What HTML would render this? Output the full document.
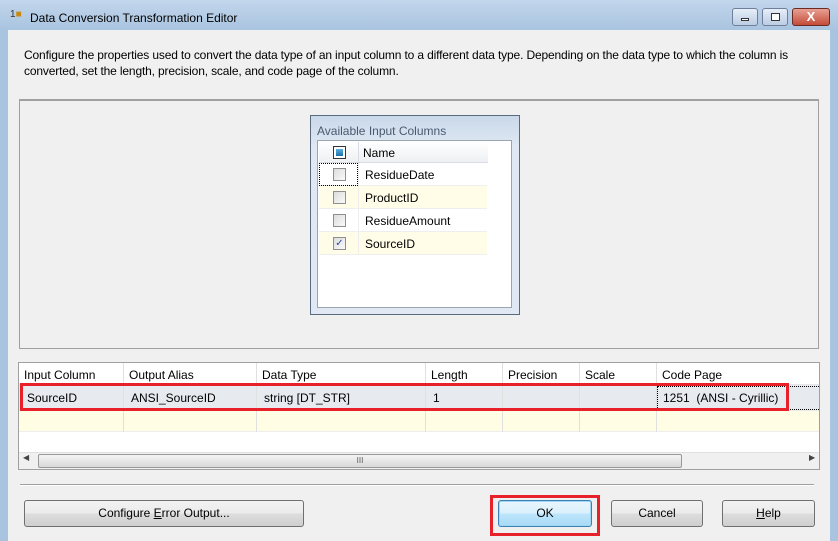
<!DOCTYPE html><html><head><style>
*{margin:0;padding:0;box-sizing:border-box}
body{width:838px;height:541px;overflow:hidden;font-family:"Liberation Sans",sans-serif;font-size:12px;color:#000;background:#a9c4e0;position:relative}
.a{position:absolute}
.btn{position:absolute;border:1px solid #707070;border-radius:3px;background:linear-gradient(#f2f2f2 0%,#ebebeb 50%,#dddddd 51%,#cfcfcf 100%);text-align:center;line-height:25px;font-size:12px}
.cb{position:absolute;width:13px;height:13px;border:1px solid #8f8f8f;background:linear-gradient(135deg,#dcdcdc,#fafafa)}
.col{position:absolute;top:0;height:100%;border-left:1px solid #e0e0e0}
</style></head><body>
<div class="a" style="left:0;top:0;width:838px;height:30px;background:linear-gradient(#c2d6ec,#a9c4e0)"></div>
<div class="a" style="left:10px;top:9px;font-size:10px;color:#333">1<span style="color:#c88a10">&#9632;</span></div>
<div class="a" style="left:30px;top:11px;font-size:12px">Data Conversion Transformation Editor</div>
<div class="a" style="left:732px;top:8px;width:26px;height:18px;border:1px solid #6d7f99;border-radius:3px;background:linear-gradient(#e6eef8,#bccde3)"><div class="a" style="left:8px;top:9px;width:8px;height:3px;border:1px solid #333;background:#fff"></div></div>
<div class="a" style="left:762px;top:8px;width:26px;height:18px;border:1px solid #6d7f99;border-radius:3px;background:linear-gradient(#e6eef8,#bccde3)"><div class="a" style="left:8px;top:4px;width:9px;height:8px;border:1px solid #333;background:#fff"></div></div>
<div class="a" style="left:792px;top:8px;width:38px;height:18px;border:1px solid #6b2a22;border-radius:3px;background:linear-gradient(#e8a093,#c44c38);color:#fff;font-weight:bold;text-align:center;line-height:16px;font-size:13px">X</div>
<div class="a" style="left:8px;top:30px;width:822px;height:511px;background:#f0f0f0"></div>
<div class="a" style="left:24px;top:47px;width:800px;line-height:16px;letter-spacing:-0.15px">Configure the properties used to convert the data type of an input column to a different data type. Depending on the data type to which the column is converted, set the length, precision, scale, and code page of the column.</div>
<div class="a" style="left:19px;top:99px;width:800px;height:250px;border:1px solid #a0a0a0;border-top:2px solid #a0a0a0;background:#f0f0f0"></div>
<div class="a" style="left:310px;top:115px;width:210px;height:200px;border:1px solid #5a6b80;background:linear-gradient(#c9d8ea,#dfe8f3 30px,#dfe8f3)"></div>
<div class="a" style="left:317px;top:124px;color:#4a5a6e">Available Input Columns</div>
<div class="a" style="left:317px;top:140px;width:195px;height:168px;border:1px solid #9aa5b3;background:#fff">
 <div class="a" style="left:1px;top:1px;width:169px;height:21px;background:linear-gradient(#fff,#eef0f3);border-bottom:1px solid #d8dce2"></div>
 <div class="a" style="left:40px;top:1px;height:21px;border-left:1px solid #d8dce2"></div>
 <div class="a" style="left:15px;top:5px;width:13px;height:13px;border:1px solid #333;background:#fff"><div class="a" style="left:2px;top:2px;width:7px;height:7px;background:linear-gradient(#5bb0e0,#1a6fa8)"></div></div>
 <div class="a" style="left:45px;top:5px">Name</div>
 <div class="a" style="left:1px;top:22px;width:168px;height:23px;background:#fff;border-bottom:1px solid #eee"></div>
 <div class="a" style="left:1px;top:22px;width:39px;height:23px;border:1px dotted #000"></div>
 <div class="a" style="left:1px;top:45px;width:168px;height:23px;background:#fffde8;border-bottom:1px solid #eee"></div>
 <div class="a" style="left:1px;top:68px;width:168px;height:23px;background:#fff;border-bottom:1px solid #eee"></div>
 <div class="a" style="left:1px;top:91px;width:168px;height:23px;background:#fffde8;border-bottom:1px solid #eee"></div>
 <div class="a" style="left:40px;top:22px;height:92px;border-left:1px solid #eee"></div>
 <div class="cb" style="left:15px;top:27px"></div><div class="a" style="left:47px;top:27px">ResidueDate</div>
 <div class="cb" style="left:15px;top:50px"></div><div class="a" style="left:47px;top:50px">ProductID</div>
 <div class="cb" style="left:15px;top:73px"></div><div class="a" style="left:47px;top:73px">ResidueAmount</div>
 <div class="cb" style="left:15px;top:96px;color:#2b4a9a;font-size:10px;line-height:11px;text-align:center">&#10003;</div><div class="a" style="left:47px;top:96px">SourceID</div>
</div>
<div class="a" style="left:18px;top:362px;width:802px;height:108px;border:1px solid #a0a0a0;background:#fff;overflow:hidden">
 <div class="a" style="left:0;top:0;width:802px;height:22px;background:#fff;border-bottom:1px solid #e6e6e6"></div>
 <div class="a" style="left:0;top:22px;width:802px;height:26px;background:#e7eaef"></div>
 <div class="a" style="left:0;top:48px;width:802px;height:21px;background:#fffde3;border-bottom:1px solid #eee"></div>
 <div class="col" style="left:104px;height:69px"></div><div class="col" style="left:237px;height:69px"></div><div class="col" style="left:406px;height:69px"></div><div class="col" style="left:483px;height:69px"></div><div class="col" style="left:560px;height:69px"></div><div class="col" style="left:637px;height:69px"></div>
 <div class="a" style="left:5px;top:5px">Input Column</div><div class="a" style="left:110px;top:5px">Output Alias</div><div class="a" style="left:243px;top:5px">Data Type</div><div class="a" style="left:412px;top:5px">Length</div><div class="a" style="left:489px;top:5px">Precision</div><div class="a" style="left:566px;top:5px">Scale</div><div class="a" style="left:643px;top:5px">Code Page</div>
 <div class="a" style="left:8px;top:28px">SourceID</div><div class="a" style="left:112px;top:28px">ANSI_SourceID</div><div class="a" style="left:245px;top:28px">string [DT_STR]</div><div class="a" style="left:414px;top:28px">1</div><div class="a" style="left:644px;top:28px">1251&nbsp; (ANSI - Cyrillic)</div>
 <div class="a" style="left:638px;top:23px;width:164px;height:24px;border:1px dotted #000;border-right:none"></div>
 <div class="a" style="left:0;top:89px;width:802px;height:17px;background:#f0f0f0;border-top:1px solid #e0e0e0"></div>
 <div class="a" style="left:4px;top:90px;font-size:8px;color:#444">&#9664;</div>
 <div class="a" style="left:19px;top:91px;width:644px;height:14px;border:1px solid #999;border-radius:2px;background:linear-gradient(#f4f4f4,#d8d8d8);text-align:center;font-size:8px;line-height:12px;color:#555">III</div>
 <div class="a" style="left:790px;top:90px;font-size:8px;color:#444">&#9654;</div>
</div>
<div class="a" style="left:20px;top:383px;width:769px;height:28px;border:3px solid #e8202a"></div>
<div class="a" style="left:20px;top:484px;width:794px;border-top:1px solid #a0a0a0;border-bottom:1px solid #fff"></div>
<div class="btn" style="left:24px;top:500px;width:280px;height:27px">Configure <u>E</u>rror Output...</div>
<div class="a" style="left:490px;top:495px;width:110px;height:41px;border:3px solid #e8202a"></div>
<div class="btn" style="left:498px;top:500px;width:94px;height:27px;border-color:#3c7fb1;box-shadow:inset 0 0 0 1px #9fd8f5;background:linear-gradient(#eaf6fd,#d9f0fc 50%,#bee6fd 51%,#a7d9f5)">OK</div>
<div class="btn" style="left:611px;top:500px;width:92px;height:27px">Cancel</div>
<div class="btn" style="left:722px;top:500px;width:93px;height:27px"><u>H</u>elp</div>
</body></html>
